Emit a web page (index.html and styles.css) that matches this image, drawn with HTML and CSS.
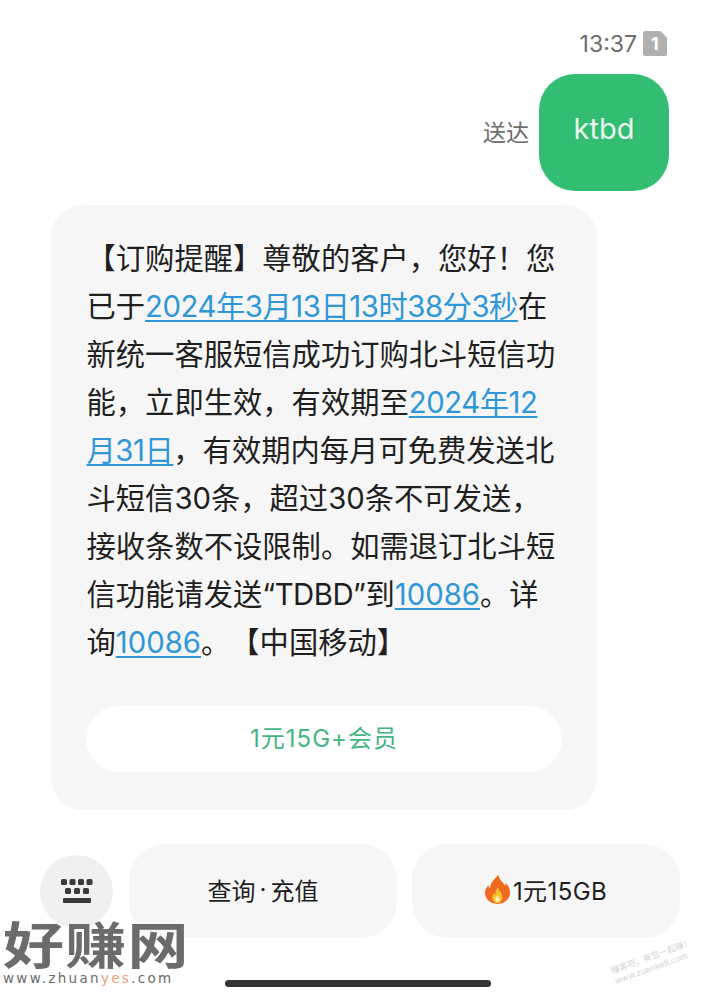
FILE: index.html
```html
<!DOCTYPE html>
<html lang="zh-CN">
<head>
    <meta charset="UTF-8">
    <title>短信</title>
    <link rel="stylesheet" href="styles.css">
</head>
<body>
    <div class="screen">
        <div class="timeRow">
            <span class="time">13:37</span>
            <span class="sim">1</span>
        </div>
        <div class="sentRow">
            <span class="status">送达</span>
            <div class="sentBubble">ktbd</div>
        </div>
        <div class="card">
            <p class="message">【订购提醒】尊敬的客户，您好！您<br>已于<a class="link date">2024年3月13日13时38分3秒</a>在<br>新统一客服短信成功订购北斗短信功<br>能，立即生效，有效期至<a class="link date">2024年12</a><br><a class="link date">月31日</a>，有效期内每月可免费发送北<br>斗短信30条，超过30条不可发送，<br>接收条数不设限制。如需退订北斗短<br>信功能请发送<span class="code">“TDBD”</span>到<a class="link">10086</a>。详<br>询<a class="link">10086</a>。【中国移动】</p>
            <div class="cardAction">1元15G+会员</div>
        </div>
        <div class="quickRow">
            <div class="keyboardBtn">
                <svg width="34" height="24" viewBox="0 0 34 24">
                    <g fill="#3a3a3a">
                        <rect x="1" y="0" width="6" height="6" rx="1.5"/>
                        <rect x="9.5" y="0" width="6" height="6" rx="1.5"/>
                        <rect x="18" y="0" width="6" height="6" rx="1.5"/>
                        <rect x="26.5" y="0" width="6" height="6" rx="1.5"/>
                        <rect x="5" y="9" width="6" height="6" rx="1.5"/>
                        <rect x="14" y="9" width="6" height="6" rx="1.5"/>
                        <rect x="23" y="9" width="6" height="6" rx="1.5"/>
                        <rect x="3" y="19" width="28" height="5" rx="1"/>
                    </g>
                </svg>
            </div>
            <div class="quickBtn">查询<span class="dot">·</span>充值</div>
            <div class="quickBtn">
                <svg class="fire" width="25" height="29" viewBox="0 0 26 30">
                    <path fill="#ee6a1f" d="M14 0c1 5 4 7 7 11 .6-1 .8-2 .7-3 2.5 3 4.3 6.5 4.3 10.5C26 25 20.500 30 13 30S0 25 0 18.500c0-3.500 1.800-6 3.500-8 .2 1.500.8 2.500 1.800 3.200C5.500 8 9.500 4.500 14 0z"/>
                    <path fill="#fbc02d" d="M13.500 13c.5 3 4.500 5 4.500 10 0 3.500-2.300 6-5 6s-5.500-2.500-5.500-5.500c0-2 1-3.500 2-4.500.3 1 .7 1.500 1.300 1.800C10.700 18 11.500 15 13.500 13z"/>
                    <path fill="#fdf0b5" d="M13 21c.5 1.500 2.500 2.500 2.500 4.500 0 1.500-1 2.500-2.500 2.500s-2.500-1-2.500-2.500c0-2 2-3 2.500-4.500z"/>
                </svg>
                <span class="offer">1元15GB</span>
            </div>
        </div>
        <div class="homeBar"></div>
        <div class="watermark">
            <div class="wmTitle">好赚网</div>
            <div class="wmUrl">www.zhuan<span class="wmAccent">yes</span>.com</div>
        </div>
        <div class="stamp">赚客吧，有您一起赚！<br>www.zuanke8.com</div>
    </div>
</body>
</html>
```

FILE: styles.css
```css
* {
    box-sizing: border-box;
}
body {
    margin: 0;
    background: #fff;
    font-family: "Inter", "Noto Sans CJK SC", sans-serif;
    text-spacing-trim: space-all;
}
.screen {
    position: relative;
    width: 705px;
    height: 1000px;
    overflow: hidden;
    padding-top: 29px;
}
.timeRow {
    display: flex;
    justify-content: flex-end;
    align-items: center;
    gap: 6px;
    height: 29px;
    padding-right: 38px;
}
.time {
    font-size: 23px;
    color: #6e6e6e;
}
.sim {
    width: 24px;
    height: 25px;
    background: #b0b0b0;
    color: #fff;
    border-radius: 2px;
    clip-path: polygon(0 0, 72% 0, 100% 26%, 100% 100%, 0 100%);
    font-size: 18px;
    font-weight: 700;
    line-height: 25px;
    text-align: center;
}
.sentRow {
    display: flex;
    justify-content: flex-end;
    align-items: center;
    gap: 10px;
    margin-top: 16px;
    padding-right: 36px;
}
.status {
    padding-bottom: 4px;
    font-size: 23px;
    color: #6e6e6e;
}
.sentBubble {
    width: 130px;
    height: 117px;
    background: #33bd73;
    border-radius: 36px;
    color: #e8f8ee;
    font-size: 29px;
    line-height: 110px;
    text-align: center;
}
.card {
    width: 546px;
    height: 605px;
    margin: 14px 0 0 51px;
    padding: 30px 35px 0 35.5px;
    background: #f6f6f6;
    border-radius: 32px;
}
.message {
    margin: 0;
    font-size: 29.3px;
    line-height: 48px;
    color: #1f1f1f;
    white-space: nowrap;
}
.link {
    color: #2f97d8;
    text-decoration: underline;
    text-decoration-thickness: 2px;
    text-underline-offset: 3px;
}
.date {
    letter-spacing: -0.45px;
}
.code {
    letter-spacing: -0.5px;
}
.cardAction {
    width: 476px;
    height: 66px;
    margin-top: 39px;
    margin-left: -0.5px;
    background: #fff;
    border-radius: 33px;
    color: #45b583;
    font-size: 24px;
    letter-spacing: 1px;
    line-height: 66px;
    text-align: center;
}
.quickRow {
    display: flex;
    align-items: center;
    gap: 15px;
    margin: 34px 0 0 40px;
}
.keyboardBtn {
    display: flex;
    align-items: center;
    justify-content: center;
    width: 73px;
    height: 73px;
    margin-right: 1px;
    background: #f0f0f0;
    border-radius: 50%;
}
.quickBtn {
    display: flex;
    align-items: center;
    justify-content: center;
    gap: 3px;
    width: 268px;
    height: 94px;
    padding-bottom: 3px;
    background: #f6f6f6;
    border-radius: 36px;
    color: #1f1f1f;
    font-size: 24px;
}
.dot {
    margin: 0 1px;
}
.offer {
    letter-spacing: 0.4px;
}
.homeBar {
    position: absolute;
    left: 225px;
    top: 980px;
    width: 266px;
    height: 7px;
    background: #333;
    border-radius: 4px;
}
.watermark {
    position: absolute;
    left: 3px;
    top: 918px;
    color: #6b6b6b;
}
.wmTitle {
    width: 150px;
    font-family: "Noto Sans CJK SC", sans-serif;
    font-size: 50px;
    font-weight: 700;
    line-height: 48px;
    letter-spacing: 1px;
    white-space: nowrap;
    transform: scaleX(1.22);
    transform-origin: left center;
}
.wmUrl {
    margin-top: 4px;
    font-family: "DejaVu Sans", sans-serif;
    font-size: 13.5px;
    line-height: 16px;
    letter-spacing: 2.3px;
    white-space: nowrap;
}
.wmAccent {
    color: #f0a27a;
}
.stamp {
    position: absolute;
    left: 611px;
    top: 951px;
    color: #d4d4d4;
    font-size: 8.5px;
    line-height: 11px;
    transform: rotate(-20deg);
    white-space: nowrap;
}
```
